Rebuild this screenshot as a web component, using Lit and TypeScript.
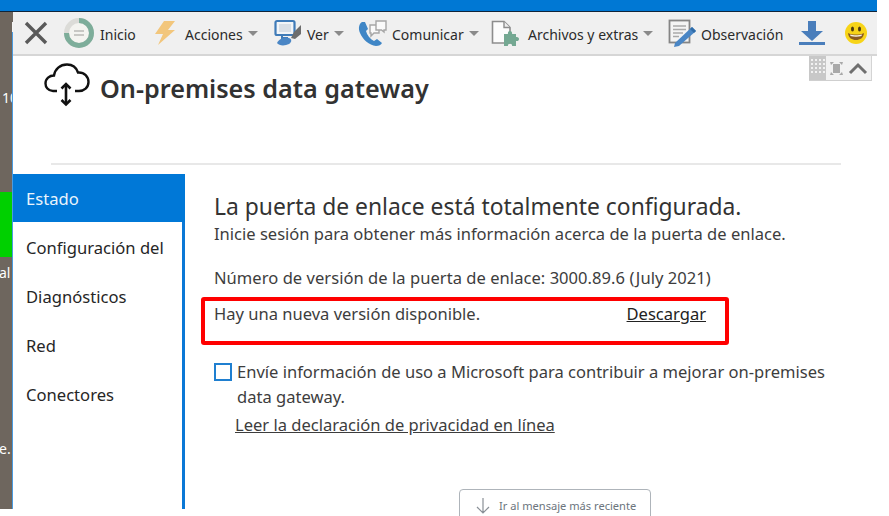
import { LitElement, html, css, svg } from "lit";
import { customElement } from "lit/decorators.js";

const caret = html`<span class="caret"></span>`;

const icons = {
  close: svg`<path d="M2 2 L22 22 M22 2 L2 22" stroke="#5a5a5a" stroke-width="3.4" fill="none"/>`,
  home: svg`<circle cx="15" cy="15" r="12.5" fill="#f4f4f0" stroke="#dcdcd8" stroke-width="5"/>
    <path d="M15 2.5 A12.5 12.5 0 1 1 2.5 15" fill="none" stroke="#7dad9a" stroke-width="5"/>
    <path d="M10 13 H20 M10 17 H20" stroke="#b9b9b5" stroke-width="1.6"/>`,
  bolt: svg`<polygon points="10,2 21,2 14,11 21,11 4,26 9,15 1,15" fill="#f2c67c"/>`,
  view: svg`<rect x="1.5" y="2" width="19" height="14" rx="1.5" fill="#f2f5f8" stroke="#3f7bb8" stroke-width="2.2"/>
    <rect x="5" y="5" width="12" height="8" fill="#d9dfe6"/>
    <path d="M8 16 V19 H14" stroke="#3f7bb8" stroke-width="2" fill="none"/>
    <path d="M27 6 L20 13 L17 19 L21 20 L27 15 Z" fill="#6d6d6d"/>
    <path d="M3 24 C5 19 11 18 15 19 C18 20 18 23 15 25 C11 27 5 27 3 24 Z" fill="#4a86c5"/>`,
  comm: svg`<path d="M5 4 C2 6 1 10 3 15 C6 22 12 27 19 28 C22 28 24 27 25 25 L20 21 L17 23 C13 21 10 17 9 13 L11 11 L8 4 Z" fill="#3f86c6"/>
    <path d="M13 7 H22 V15 H17 L14 18 V15 H13 Z" fill="#fafafa" stroke="#a6a6a6" stroke-width="1.4"/>
    <path d="M19 3 H29 V12 H27 V14 L24.5 12 H19 Z" fill="#fafafa" stroke="#a6a6a6" stroke-width="1.4"/>`,
  files: svg`<path d="M1.5 4.5 H13 L19 10.5 V26 H1.5 Z" fill="#fcfcfc" stroke="#8d8d8d" stroke-width="1.6"/>
    <path d="M13 4.500 V10.500 H19" fill="#eee" stroke="#8d8d8d" stroke-width="1.4"/>
    <path transform="translate(0 -2)" d="M13 19 H17 C16 15 22 15 21 19 H25 V22 C29 21 29 27 25 26 V31 H21 C22 28 16 28 17 31 H13 Z" fill="#74a892"/>`,
  note: svg`<rect x="1.5" y="1.5" width="20" height="22" fill="#f4f4f4" stroke="#858585" stroke-width="1.8"/>
    <path d="M5 7 H18 M5 10.5 H18 M5 14 H15 M5 17.5 H11" stroke="#a9a9a9" stroke-width="1.3"/>
    <path d="M24 8 L28 12 L11 27 L6 28 L7 24 Z" fill="#4a86c5"/>
    <path d="M24 8 L28 12 L26 14 L22 10 Z" fill="#2f6ca8"/>`,
  down: svg`<path d="M9 1 H17 V11 H24 L13 21 L2 11 H9 Z" fill="#4a7ebb"/>
    <rect x="0" y="22" width="26" height="3" fill="#4a7ebb"/>`,
  smile: svg`<circle cx="11" cy="11" r="11" fill="#f7d418"/>
    <ellipse cx="7.5" cy="7" rx="1.5" ry="2.6" fill="#4d3a12"/>
    <ellipse cx="14.5" cy="7" rx="1.5" ry="2.6" fill="#4d3a12"/>
    <path d="M3 11 C7 13 15 13 19 11 C18.500 16 15 18 11 18 C7 18 3.500 16 3 11 Z" fill="#8a5a20"/>
    <path d="M5 12.500 C8 13.500 14 13.500 17 12.500 L16.500 14 C13 15 9 15 5.500 14 Z" fill="#f8f1df"/>`,
};

@customElement("app-root")
export class AppRoot extends LitElement {
  static styles = css`
    :host {
      display: block;
      width: 889px;
      height: 516px;
      position: relative;
      overflow: hidden;
      background: #fff;
      font-family: "Noto Sans", "Open Sans", sans-serif;
      color: #333;
    }
    .frame { width: 877px; height: 509px; display: flex; flex-direction: column; }
    .topbar { height: 11px; flex: none; background: #0078d4; border-bottom: 1px solid #10253a; }
    .desk { flex: 1; display: flex; min-height: 0; }
    .strip {
      flex: none;
      width: 12px;
      background: #6e665e;
      border-right: 1px solid #4a9be0;
      border-image: linear-gradient(to bottom, #6e665e 11px, #f4f4f4 11px, #f4f4f4 21px, #4a9be0 21px) 1;
      overflow: hidden;
      color: #fff;
      font-size: 14px;
      line-height: 16px;
      white-space: nowrap;
      display: flex;
      flex-direction: column;
    }
    .s1 { margin: 78px 0 0 2px; }
    .green { margin-top: 86px; height: 65px; background: #00d000; flex: none; }
    .s2 { margin-top: 8px; margin-left: -1px; }
    .s3 { margin-top: 160px; margin-left: -1px; }
    .content { flex: 1; min-width: 0; display: flex; flex-direction: column; position: relative; }
    .toolbar {
      flex: none;
      height: 42px;
      box-sizing: content-box;
      background: #f0f0f0;
      border-bottom: 2px solid #d6d6d6;
      display: grid;
      grid-template-columns: 40px 90px 120px 83px 134px 177px 131px 46px 22px;
      padding-left: 11px;
      align-items: center;
      font-size: 14px;
      white-space: nowrap;
    }
    .tool { display: flex; align-items: center; height: 100%; }
    .tool svg { flex: none; display: block; overflow: visible; }
    .inicio { color: #555; }
    .lab { color: #2b2b2b; margin-left: 6px; position: relative; top: 1px; }
    .caret {
      width: 0; height: 0; margin-left: 5px; margin-top: 1px;
      border-left: 5px solid transparent;
      border-right: 5px solid transparent;
      border-top: 5px solid #8a8a8a;
    }
    .widget {
      position: absolute;
      top: 44px;
      left: 796px;
      width: 62px;
      height: 24px;
      display: flex;
      background: #f2f2f2;
      border-right: 1px solid #d4d4d4;
      border-bottom: 1px solid #cfcfcf;
    }
    .grip { width: 17px; background: #c8c8c8; display: grid; grid-template-columns: repeat(4, 2px); grid-auto-rows: 2px; gap: 2px; padding: 3px 2px; box-sizing: border-box; }
    .grip i { background: #f2f2f2; display: block; }
    .widget svg { display: block; }
    .panel { flex: 1; min-height: 0; display: flex; flex-direction: column; }
    .titlerow {
      height: 107px;
      flex: none;
      display: flex;
      align-items: flex-start;
      padding-left: 31px;
      box-sizing: border-box;
    }
    .cloud { margin-top: 7px; flex: none; display: block; }
    .title { margin: 14px 0 0 10px; font-size: 25.200px; font-weight: 600; line-height: 36px; color: #323232; white-space: nowrap; }
    .rule { height: 2px; flex: none; margin: 0 36px 9px 38px; background: #e8e8e8; }
    .row { flex: 1; display: flex; min-height: 0; }
    .side {
      width: 172px;
      flex: none;
      box-sizing: border-box;
      border-right: 3px solid #0a78d6;
      font-size: 16.600px;
      color: #262626;
    }
    .side div { height: 49px; line-height: 50px; padding-left: 13px; white-space: nowrap; }
    .side .on { background: #0078d7; color: #eaf4fc; margin-right: -3px; height: 48px; line-height: 50px; margin-bottom: 1px; }
    .main { flex: 1; min-width: 0; padding: 18px 0 0 29px; font-size: 16.550px; color: #3d3d3d; white-space: nowrap; }
    .h { font-size: 22.850px; line-height: 30px; color: #333; }
    .sub { line-height: 22px; margin-top: 1px; }
    .ver { line-height: 22px; margin-top: 22px; letter-spacing: 0.04px; }
    .box {
      margin: 8px 0 0 -13px;
      width: 528px;
      height: 48px;
      box-sizing: border-box;
      border: 4px solid #ff0000;
      border-radius: 3px;
      padding: 2px 19px 0 9px;
      line-height: 22px;
      display: flex;
      justify-content: space-between;
      align-items: flex-start;
    }
    a { color: inherit; text-decoration: underline; }
    .box a { color: #222; }
    .consent { margin-top: 14px; display: flex; line-height: 25px; }
    .check { width: 14px; height: 14px; border: 2px solid #1f7fd0; margin: 4px 5px 0 0; flex: none; background: #fff; }
    .privacy { display: block; margin: 5px 0 0 21px; line-height: 22px; width: max-content; }
    .jump {
      position: absolute;
      left: 446px;
      top: 477px;
      width: 192px;
      height: 40px;
      box-sizing: border-box;
      border: 1px solid #aeb4ba;
      border-radius: 4px;
      background: #fff;
      display: flex;
      align-items: flex-start;
      padding: 7px 0 0 16px;
      font-size: 11.100px;
      line-height: 18px;
      color: #6c757d;
      white-space: nowrap;
    }
    .jump svg { margin-right: 9px; flex: none; }
  `;

  private tool(cls: string, w: number, h: number, body: unknown, label?: string, hasCaret = false) {
    return html`<div class="tool">
      <svg width=${w} height=${h} viewBox="0 0 ${w} ${h}">${body}</svg>
      ${label ? html`<span class="lab ${cls}">${label}</span>` : ""}
      ${hasCaret ? caret : ""}
    </div>`;
  }

  render() {
    return html`
      <div class="frame">
        <div class="topbar"></div>
        <div class="desk">
          <div class="strip">
            <span class="s1">10</span>
            <div class="green"></div>
            <span class="s2">al</span>
            <span class="s3">e.</span>
          </div>
          <div class="content">
            <div class="toolbar">
              ${this.tool("", 24, 24, icons.close)}
              ${this.tool("inicio", 30, 30, icons.home, "Inicio")}
              ${this.tool("", 25, 28, icons.bolt, "Acciones", true)}
              ${this.tool("", 27, 28, icons.view, "Ver", true)}
              ${this.tool("", 29, 30, icons.comm, "Comunicar", true)}
              ${this.tool("", 31, 32, icons.files, "Archivos y extras", true)}
              ${this.tool("", 27, 29, icons.note, "Observación")}
              ${this.tool("", 26, 26, icons.down)}
              ${this.tool("", 22, 22, icons.smile)}
            </div>
            <div class="widget">
              <div class="grip">${Array.from({ length: 16 }, () => html`<i></i>`)}</div>
              <svg width="44" height="24" viewBox="0 0 44 24">
                <path d="M4 6 H8 L5 9 Z M17 6 H13 L16 9 Z M4 19 H8 L5 16 Z M17 19 H13 L16 16 Z M7 8 H14 V17 H7 Z" fill="#a9a9a9"/>
                <path d="M24 17 L32 9 L40 17" fill="none" stroke="#6f6f6f" stroke-width="3"/>
              </svg>
            </div>
            <div class="panel">
              <div class="titlerow">
                <svg class="cloud" width="46" height="44" viewBox="0 0 46 44">
                  <path d="M13 28 H9 C4 28 1.500 24 1.500 20.500 C1.500 15.500 5.500 12.500 10 12.500 C11 6 16 1.500 23 1.500 C28.500 1.500 32.500 5 34 9.500 C40.500 9 44.500 14 44.500 19 C44.500 24.500 40 28 35 28 H31" fill="none" stroke="#111" stroke-width="2.400"/>
                  <path d="M22 21 V41" stroke="#111" stroke-width="2.600"/>
                  <path d="M17.500 25.500 L22 21 L26.500 25.500 M17.500 37 L22 41.500 L26.500 37" fill="none" stroke="#111" stroke-width="2.600"/>
                </svg>
                <div class="title">On-premises data gateway</div>
              </div>
              <div class="rule"></div>
              <div class="row">
                <div class="side">
                  <div class="on">Estado</div>
                  <div>Configuración del</div>
                  <div>Diagnósticos</div>
                  <div>Red</div>
                  <div>Conectores</div>
                </div>
                <div class="main">
                  <div class="h">La puerta de enlace está totalmente configurada.</div>
                  <div class="sub">Inicie sesión para obtener más información acerca de la puerta de enlace.</div>
                  <div class="ver">Número de versión de la puerta de enlace: 3000.89.6 (July 2021)</div>
                  <div class="box"><span>Hay una nueva versión disponible.</span><a href="#">Descargar</a></div>
                  <div class="consent">
                    <span class="check"></span>
                    <span>Envíe información de uso a Microsoft para contribuir a mejorar on-premises<br />data gateway.</span>
                  </div>
                  <a class="privacy" href="#">Leer la declaración de privacidad en línea</a>
                </div>
              </div>
            </div>
            <div class="jump">
              <svg width="14" height="18" viewBox="0 0 14 18"><path d="M7 1 V16 M1 10 L7 16 L13 10" fill="none" stroke="#8a9097" stroke-width="1.200"/></svg>
              <span>Ir al mensaje más reciente</span>
            </div>
          </div>
        </div>
      </div>
    `;
  }
}
